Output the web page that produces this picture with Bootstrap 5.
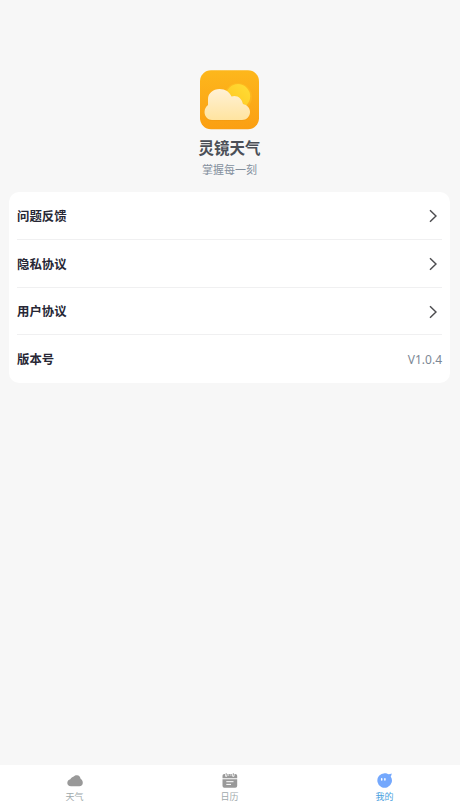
<!DOCTYPE html>
<html lang="zh-CN">
<head>
  <meta charset="UTF-8" />
  <meta name="viewport" content="width=device-width, initial-scale=1" />
  <title>灵镜天气</title>
  <link href="https://cdn.jsdelivr.net/npm/bootstrap@5.3.3/dist/css/bootstrap.min.css" rel="stylesheet" />
  <style>
    body {
      background: #f7f7f7;
      font-family: "Noto Sans CJK SC", sans-serif;
      min-height: 100vh;
      overflow: hidden;
    }
    .profile {
      padding-top: 70px;
      padding-right: 1px;
    }
    .app-logo {
      width: 59px;
      height: 60px;
    }
    .app-name {
      font-size: 15.5px;
      line-height: 22px;
      font-weight: 700;
      color: #4b4f57;
      margin-top: 6px;
    }
    .app-slogan {
      font-size: 11px;
      line-height: 16px;
      color: #84909e;
      margin-top: 3px;
    }
    .settings {
      margin: 15px 10px 0 9px;
      padding: 0 8px;
      border-radius: 10px;
      background: #fff;
    }
    .settings .list-group-item {
      height: 47.6px;
      padding: 1.6px 0 0;
      border-color: #f0f0f1;
      background: none;
      font-size: 12.4px;
      font-weight: 700;
      color: #272735;
    }
    .settings .list-group-item:first-child {
      height: 48px;
    }
    .arrow {
      width: 8px;
      height: 14px;
      margin-right: 5px;
    }
    .version {
      font-family: "Noto Sans", sans-serif;
      font-size: 12px;
      font-weight: 400;
      color: #7c8795;
    }
    .tabbar {
      height: 39px;
      padding: 7px 55.5px 0 54.5px;
      background: #fff;
    }
    .tab {
      width: 40px;
      font-size: 9px;
      line-height: 14px;
      color: #a0a9ab;
      text-decoration: none;
    }
    .tab svg {
      width: 18px;
      height: 18px;
    }
    .tab.active {
      color: #4a9fe0;
    }
  </style>
</head>
<body class="d-flex flex-column">
  <header class="profile d-flex flex-column align-items-center">
    <svg class="app-logo" viewBox="0 0 59 60">
      <defs>
        <linearGradient id="bg" x1="0" y1="0" x2="0" y2="1">
          <stop offset="0" stop-color="#fdb71c" />
          <stop offset="1" stop-color="#fb9f13" />
        </linearGradient>
        <linearGradient id="sun" x1="1" y1="0" x2="0" y2="1">
          <stop offset="0" stop-color="#ffdd36" />
          <stop offset="1" stop-color="#ffc51e" />
        </linearGradient>
        <linearGradient id="cloud" x1="0" y1="0" x2="0" y2="1">
          <stop offset="0" stop-color="#fff1d5" />
          <stop offset="1" stop-color="#ffe4a0" />
        </linearGradient>
      </defs>
      <rect x="0" y="0.300" width="59" height="59" rx="11" fill="url(#bg)" />
      <circle cx="38" cy="27" r="14" fill="#ffc425" opacity=".4" />
      <circle cx="38" cy="26.300" r="12.200" fill="url(#sun)" />
      <path d="M12 51C8 51 4.500 47.500 4.500 42.500C4.500 38.500 6 36 8.300 34.500C7 26 12 20 19.500 20C25.500 20 30 23.500 31.500 27C37 25 42 28.500 43 34C47.500 35 50 38.500 50 42.500C50 47.500 46.500 51 42 51Z" fill="#ec930e" opacity=".35" />
      <path d="M12 50C8 50 4.500 46.500 4.500 42C4.500 39 6 36.500 8 35V29C8 23.500 13 19 19.500 19C25.500 19 29.500 22 31.500 26.500C37 24.500 42 28.500 43 34C47.500 35 50 38 50 42C50 46.500 46.500 50 42 50Z" fill="url(#cloud)" />
    </svg>
    <div class="app-name">灵镜天气</div>
    <div class="app-slogan">掌握每一刻</div>
  </header>

  <main class="settings">
    <div class="list-group list-group-flush">
      <a href="#" class="list-group-item d-flex justify-content-between align-items-center">
        问题反馈
        <svg class="arrow" viewBox="0 0 8 14"><path d="M1 1.300L7 7L1 12.700" fill="none" stroke="#4d4d50" stroke-width="1.500" /></svg>
      </a>
      <a href="#" class="list-group-item d-flex justify-content-between align-items-center">
        隐私协议
        <svg class="arrow" viewBox="0 0 8 14"><path d="M1 1.300L7 7L1 12.700" fill="none" stroke="#4d4d50" stroke-width="1.500" /></svg>
      </a>
      <a href="#" class="list-group-item d-flex justify-content-between align-items-center">
        用户协议
        <svg class="arrow" viewBox="0 0 8 14"><path d="M1 1.300L7 7L1 12.700" fill="none" stroke="#4d4d50" stroke-width="1.500" /></svg>
      </a>
      <div class="list-group-item d-flex justify-content-between align-items-center">
        版本号
        <span class="version">V1.0.4</span>
      </div>
    </div>
  </main>

  <!-- Bottom tabs -->
  <nav class="tabbar d-flex justify-content-between mt-auto">
    <a href="#" class="tab d-flex flex-column align-items-center">
      <svg viewBox="0 0 18 18"><path d="M5 14.200C2.700 14.200 1.300 12.800 1.300 10.900C1.300 9 2.500 7.700 4.300 7.200C5.200 5.800 6.300 5 7.700 4.600C8.600 3.600 9.800 3.100 11 3.200C13 3.400 14.300 4.700 14.600 6.700C16 7.500 16.800 8.900 16.800 10.700C16.800 12.800 15.400 14.200 13.400 14.200Z" fill="#999" /></svg>
      <span>天气</span>
    </a>
    <a href="#" class="tab d-flex flex-column align-items-center">
      <svg viewBox="0 0 18 18">
        <path d="M1.500 6.200V3.800Q1.500 2 3.300 2H4V3.600A1.200 1.200 0 0 0 6.400 3.600V2H11.100V3.600A1.200 1.200 0 0 0 13.500 3.600V2H14.200Q16.200 2 16.200 3.800V6.200Z" fill="#999" />
        <path d="M5.200 1.200V3.600M12.300 1.200V3.600" stroke="#999" stroke-width="1" />
        <path d="M7.700 2V4M9.900 2V4" stroke="#fff" stroke-width=".6" />
        <path d="M1.500 7.200H16.200V13.800Q16.200 15.700 14.200 15.700H3.300Q1.500 15.700 1.500 13.800Z" fill="#999" />
        <path d="M5.300 9.700H12.500M5.300 12.400H10" stroke="#fff" stroke-width="1" />
      </svg>
      <span>日历</span>
    </a>
    <a href="#" class="tab active d-flex flex-column align-items-center">
      <svg viewBox="0 0 18 18">
        <path d="M8.700 1.200C10.400 1.200 11.500 1.600 12.700 2.300C13.600 2.300 14.700 2 15.700 1.500C15.700 2.700 15.200 3.800 14.700 4.400A7.300 7.300 0 1 1 8.700 1.200Z" fill="#74a8fd" />
        <path d="M5.700 6.700V8.100M8.900 6.700V8.100" stroke="#fff" stroke-width="1.500" stroke-linecap="round" />
      </svg>
      <span>我的</span>
    </a>
  </nav>

  <script src="https://cdn.jsdelivr.net/npm/bootstrap@5.3.3/dist/js/bootstrap.bundle.min.js"></script>
</body>
</html>
